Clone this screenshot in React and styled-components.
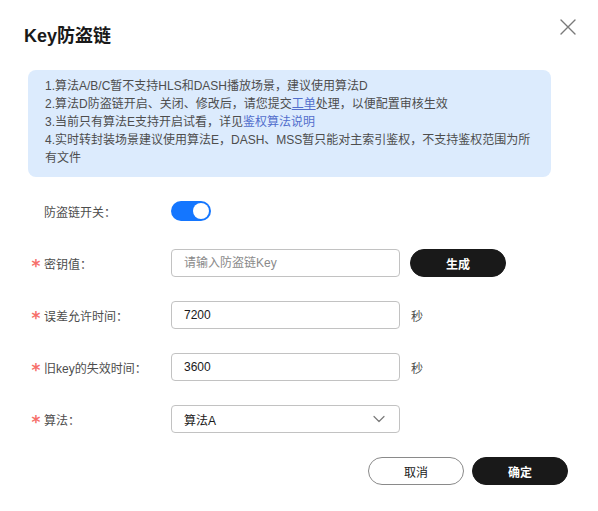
import styled, { createGlobalStyle } from 'styled-components';

const GlobalStyle = createGlobalStyle`
  body {
    margin: 0;
    background: #fff;
    font-family: "Liberation Sans", "Noto Sans CJK SC", sans-serif;
    color: #191919;
  }
`;

const Dialog = styled.div`
  position: relative;
  width: 598px;
  height: 511px;
  box-sizing: border-box;
  background: #fff;
`;

const Header = styled.div`
  padding: 24px 24px 0 24px;
  height: 24px;
  margin-bottom: 22px;
`;

const Title = styled.h2`
  margin: 0;
  font-size: 18px;
  line-height: 24px;
  font-weight: 700;
  color: #191919;
`;

const CloseButton = styled.button`
  position: absolute;
  top: 18px;
  right: 21px;
  width: 18px;
  height: 18px;
  padding: 0;
  border: none;
  background: none;
  display: flex;
  align-items: center;
  justify-content: center;
  cursor: pointer;
`;

const Body = styled.div`
  padding: 0 47px 0 28px;
`;

const Notice = styled.div`
  background: #dcebfd;
  border-radius: 8px;
  padding: 7px 16px 10px 17px;
  font-size: 12px;
  line-height: 18px;
  color: #4d4d4d;
`;

const Link = styled.a`
  color: #526ecc;
  text-decoration: ${({ $underline }) => ($underline ? 'underline' : 'none')};
  cursor: pointer;
`;

const Form = styled.div`
  display: flex;
  flex-direction: column;
  gap: 24px;
  margin-top: 20px;
`;

const Row = styled.div`
  display: flex;
  align-items: center;
  height: 28px;
`;

const Label = styled.div`
  width: 143px;
  flex-shrink: 0;
  display: flex;
  align-items: center;
  font-size: 12px;
  color: #4d4d4d;
`;

const Star = styled.span`
  display: inline-flex;
  justify-content: center;
  width: 16px;
  height: 12px;
  overflow: visible;
  color: #f66f6a;
  font-family: "DejaVu Sans", sans-serif;
  font-size: 17px;
  font-weight: 700;
  line-height: 12px;
  transform: translateY(3px);
  visibility: ${({ $hidden }) => ($hidden ? 'hidden' : 'visible')};
`;

const Input = styled.input`
  width: 229px;
  height: 28px;
  box-sizing: border-box;
  border: 1px solid #c2c2c2;
  border-radius: 4px;
  padding: 0 12px;
  font-family: inherit;
  font-size: 12px;
  color: #191919;
  outline: none;

  &::placeholder {
    color: #8a8a8a;
  }
`;

const Select = styled.div`
  width: 229px;
  height: 28px;
  box-sizing: border-box;
  border: 1px solid #c2c2c2;
  border-radius: 4px;
  padding: 0 14px 0 12px;
  display: flex;
  align-items: center;
  justify-content: space-between;
  font-size: 12px;
  color: #191919;
`;

const Unit = styled.span`
  margin-left: 11px;
  font-size: 12px;
  color: #4d4d4d;
`;

const Toggle = styled.div`
  width: 40px;
  height: 20px;
  border-radius: 10px;
  background: #1476ff;
  display: flex;
  align-items: center;
  justify-content: ${({ $on }) => ($on ? 'flex-end' : 'flex-start')};
  padding: 0 2px;
  box-sizing: border-box;
`;

const Knob = styled.div`
  width: 16px;
  height: 16px;
  border-radius: 50%;
  background: #fff;
`;

const Button = styled.button`
  width: 96px;
  height: 28px;
  border-radius: 14px;
  font-family: inherit;
  font-size: 12px;
  cursor: pointer;
  border: 1px solid ${({ $primary }) => ($primary ? '#191919' : '#8a8a8a')};
  background: ${({ $primary }) => ($primary ? '#191919' : '#fff')};
  color: ${({ $primary }) => ($primary ? '#fff' : '#191919')};
  font-weight: ${({ $primary }) => ($primary ? 700 : 400)};
`;

const GenerateButton = styled(Button)`
  margin-left: 10px;
`;

const Footer = styled.div`
  display: flex;
  justify-content: flex-end;
  gap: 8px;
  padding: 0 30px 0 0;
  margin-top: 24px;
`;

function CloseIcon() {
  return (
    <svg width="16" height="16" viewBox="0 0 16 16" fill="none">
      <path d="M1 1L15 15M15 1L1 15" stroke="#7a7a7a" strokeWidth="1.4" strokeLinecap="round" />
    </svg>
  );
}

function Chevron() {
  return (
    <svg width="12" height="8" viewBox="0 0 12 8" fill="none">
      <path d="M1 1.5L6 6.5L11 1.5" stroke="#7a7a7a" strokeWidth="1.2" strokeLinecap="round" strokeLinejoin="round" />
    </svg>
  );
}

export default function App() {
  return (
    <>
      <GlobalStyle />
      <Dialog>
        <Header>
          <Title>Key防盗链</Title>
        </Header>
        <CloseButton aria-label="close">
          <CloseIcon />
        </CloseButton>
        <Body>
          <Notice>
            <div>1.算法A/B/C暂不支持HLS和DASH播放场景，建议使用算法D</div>
            <div>
              2.算法D防盗链开启、关闭、修改后，请您提交<Link $underline>工单</Link>处理，以便配置审核生效
            </div>
            <div>
              3.当前只有算法E支持开启试看，详见<Link>鉴权算法说明</Link>
            </div>
            <div>4.实时转封装场景建议使用算法E，DASH、MSS暂只能对主索引鉴权，不支持鉴权范围为所有文件</div>
          </Notice>
          <Form>
            <Row>
              <Label>
                <Star $hidden>*</Star>防盗链开关：
              </Label>
              <Toggle $on>
                <Knob />
              </Toggle>
            </Row>
            <Row>
              <Label>
                <Star>*</Star>密钥值：
              </Label>
              <Input placeholder="请输入防盗链Key" />
              <GenerateButton $primary>生成</GenerateButton>
            </Row>
            <Row>
              <Label>
                <Star>*</Star>误差允许时间：
              </Label>
              <Input defaultValue="7200" />
              <Unit>秒</Unit>
            </Row>
            <Row>
              <Label>
                <Star>*</Star>旧key的失效时间：
              </Label>
              <Input defaultValue="3600" />
              <Unit>秒</Unit>
            </Row>
            <Row>
              <Label>
                <Star>*</Star>算法：
              </Label>
              <Select>
                <span>算法A</span>
                <Chevron />
              </Select>
            </Row>
          </Form>
        </Body>
        <Footer>
          <Button>取消</Button>
          <Button $primary>确定</Button>
        </Footer>
      </Dialog>
    </>
  );
}
